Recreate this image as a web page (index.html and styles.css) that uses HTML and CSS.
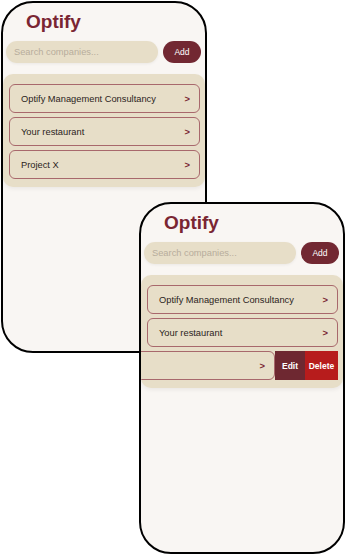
FILE: index.html
```html
<!DOCTYPE html>
<html lang="en">
<head>
    <meta charset="UTF-8">
    <meta name="viewport" content="width=device-width, initial-scale=1.0">
    <title>Optify - company list</title>
    <link rel="stylesheet" href="styles.css">
</head>
<body>
    <div class="stage">
        <!-- schermata normale -->
        <div class="phone phone-back">
            <h1 class="title">Optify</h1>
            <div class="search-row">
                <input class="search" type="text" placeholder="Search companies...">
                <button class="add-btn">Add</button>
            </div>
            <div class="list">
                <div class="item"><span>Optify Management Consultancy</span><span class="arrow">&gt;</span></div>
                <div class="item"><span>Your restaurant</span><span class="arrow">&gt;</span></div>
                <div class="item"><span>Project X</span><span class="arrow">&gt;</span></div>
            </div>
        </div>

        <!-- schermata con swipe sull'ultima riga -->
        <div class="phone phone-front">
            <h1 class="title">Optify</h1>
            <div class="search-row">
                <input class="search" type="text" placeholder="Search companies...">
                <button class="add-btn">Add</button>
            </div>
            <div class="list">
                <div class="item"><span>Optify Management Consultancy</span><span class="arrow">&gt;</span></div>
                <div class="item"><span>Your restaurant</span><span class="arrow">&gt;</span></div>
                <div class="swipe-row">
                    <div class="item swiped"><span>Project X</span><span class="arrow">&gt;</span></div>
                    <button class="action edit">Edit</button>
                    <button class="action delete">Delete</button>
                </div>
            </div>
        </div>
    </div>
</body>
</html>
```

FILE: styles.css
```css
body {
    margin: 0;
    background-color: #ffffff;
    font-family: 'Liberation Sans', Arial, sans-serif;
}
.stage {
    display: grid;
    width: 347px;
    height: 556px;
}
.phone {
    grid-area: 1 / 1;
    box-sizing: border-box;
    width: 206px;
    height: 352px;
    border: 2px solid #000;
    border-radius: 32px;
    background-color: #f9f6f3;
    overflow: hidden;
    display: flex;
    flex-direction: column;
}
.phone-back {
    margin: 1px 0 0 1px;
}
.phone-front {
    margin: 202px 0 0 139px;
}
.title {
    margin: 8px 0 0 23px;
    font-size: 19px;
    line-height: 22px;
    font-weight: bold;
    color: #7a2532;
}
.search-row {
    display: flex;
    gap: 5px;
    margin-top: 8px;
    padding: 0 4px 0 3px;
}
.search {
    flex: 1;
    min-width: 0;
    height: 22px;
    box-sizing: border-box;
    border: none;
    border-radius: 11px;
    padding: 0 8px;
    background-color: #e7dec8;
    font-family: inherit;
    font-size: 9.3px;
    color: #333;
    box-shadow: 0 1px 3px rgba(0, 0, 0, 0.06);
    outline: none;
}
.search::placeholder {
    color: #b7ad9c;
}
.add-btn {
    width: 38px;
    height: 22px;
    border: none;
    border-radius: 11px;
    background-color: #722832;
    color: #fff;
    font-family: inherit;
    font-size: 8.5px;
    padding: 0;
}
.list {
    margin-top: 11px;
    background-color: #e7dec8;
    border-radius: 10px;
    padding: 10px 5px 8px 6px;
    display: flex;
    flex-direction: column;
    gap: 4px;
    overflow: hidden;
    box-shadow: 0 2px 4px rgba(0, 0, 0, 0.06);
}
.item {
    box-sizing: border-box;
    height: 29px;
    border: 1px solid #a8686c;
    border-radius: 6px;
    padding: 0 9px 0 11px;
    display: flex;
    align-items: center;
    justify-content: space-between;
    font-size: 9.3px;
    color: #2b2321;
}
.arrow {
    color: #7a2532;
    font-weight: bold;
}
.swipe-row {
    display: flex;
    height: 29px;
}
.swiped {
    flex: 0 0 100%;
    margin-left: -63px;
}
.action {
    border: none;
    padding: 0;
    color: #fff;
    font-family: inherit;
    font-size: 8.5px;
    font-weight: bold;
}
.edit {
    flex: 0 0 30px;
    background-color: #6e2831;
}
.delete {
    flex: 0 0 33px;
    background-color: #b71c1c;
}
```
